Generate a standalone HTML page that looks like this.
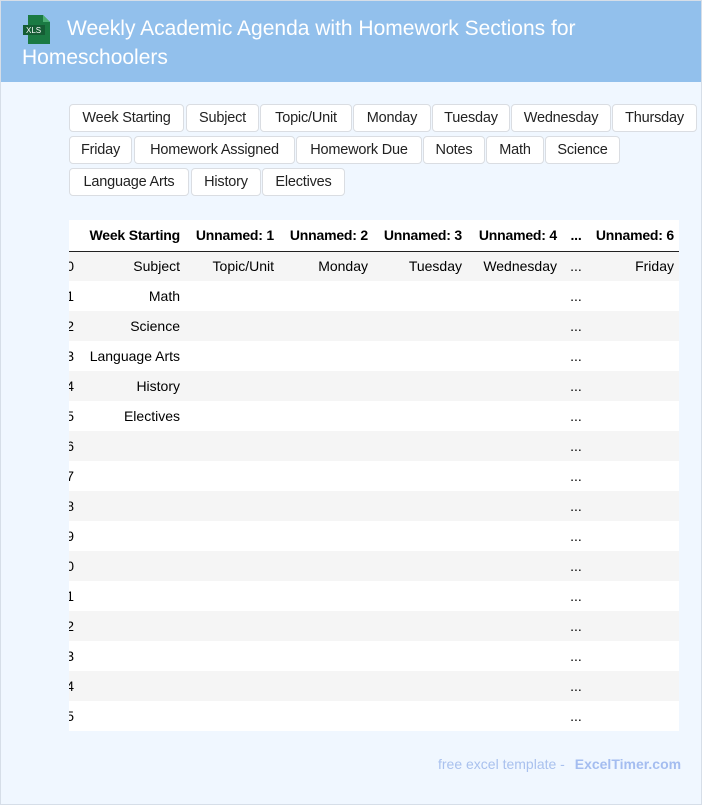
<!DOCTYPE html>
<html><head><meta charset="utf-8"><style>
body{margin:0;width:702px;height:805px;font-family:"Liberation Sans",Arial,sans-serif;background:#fff;}
.page{position:absolute;left:0;top:0;width:700px;height:803px;border:1px solid #d6dee8;background:#f0f7ff;overflow:hidden;}
.hdr{background:#92c0ec;height:81px;position:relative;}
.hdr h1{margin:0;position:absolute;left:21px;top:13px;width:670px;font-weight:normal;font-size:21px;line-height:29px;color:#fff;text-indent:45px;}
.icon{position:absolute;left:22px;top:14px;}
.tag{position:absolute;box-sizing:border-box;height:28px;line-height:26px;text-align:center;background:#fff;border:1px solid #dadde2;border-radius:4px;font-size:14.5px;color:#222;white-space:nowrap;letter-spacing:-0.2px;}
.tw{position:absolute;left:68px;top:219px;width:610px;height:511px;overflow:hidden;background:#fff;}
table{position:absolute;left:-18px;top:0;border-collapse:collapse;font-size:14px;table-layout:fixed;width:629px;}
td,th{height:30px;padding:0 6px 0 0;text-align:right;white-space:nowrap;box-sizing:border-box;overflow:hidden;}
td:first-child{padding-right:1px;overflow:visible;}
th{font-weight:bold;border-bottom:1.5px solid #222;height:31px;letter-spacing:-0.2px;}
tr:nth-child(even) td{background:#f5f5f5;}
.d{text-align:center;padding:0;}
.foot{position:absolute;left:437px;top:755px;font-size:14px;color:#a9c1ee;}
.foot b{color:#a4bdf0;margin-left:6px;}
</style></head><body><div class="page">
<div class="hdr">
<svg class="icon" width="28" height="30" viewBox="0 0 28 30"><path d="M5 0h15l7 7v22H5z" fill="#1b7a43"/><path d="M20 0v7h7z" fill="#4caf74"/><rect x="0" y="10" width="22" height="10" fill="#155d34"/><text x="3" y="18" font-size="8" fill="#fff" font-family="Liberation Sans">XLS</text></svg>
<h1>Weekly Academic Agenda with Homework Sections for Homeschoolers</h1>
</div>
<span class="tag" style="left:68px;top:103px;width:115px">Week Starting</span>
<span class="tag" style="left:185px;top:103px;width:73px">Subject</span>
<span class="tag" style="left:259px;top:103px;width:92px">Topic/Unit</span>
<span class="tag" style="left:352px;top:103px;width:78px">Monday</span>
<span class="tag" style="left:431px;top:103px;width:78px">Tuesday</span>
<span class="tag" style="left:510px;top:103px;width:100px">Wednesday</span>
<span class="tag" style="left:611px;top:103px;width:85px">Thursday</span>
<span class="tag" style="left:68px;top:135px;width:63px">Friday</span>
<span class="tag" style="left:133px;top:135px;width:161px">Homework Assigned</span>
<span class="tag" style="left:295px;top:135px;width:126px">Homework Due</span>
<span class="tag" style="left:422px;top:135px;width:62px">Notes</span>
<span class="tag" style="left:485px;top:135px;width:58px">Math</span>
<span class="tag" style="left:544px;top:135px;width:75px">Science</span>
<span class="tag" style="left:68px;top:167px;width:120px">Language Arts</span>
<span class="tag" style="left:190px;top:167px;width:70px">History</span>
<span class="tag" style="left:261px;top:167px;width:83px">Electives</span>
<div class="tw"><table>
<colgroup><col style="width:24px"><col style="width:111px"><col style="width:94px"><col style="width:94px"><col style="width:94px"><col style="width:95px"><col style="width:26px"><col style="width:91px"></colgroup>
<tr><th></th><th>Week Starting</th><th>Unnamed: 1</th><th>Unnamed: 2</th><th>Unnamed: 3</th><th>Unnamed: 4</th><th class="d">...</th><th>Unnamed: 6</th></tr>
<tr><td>0</td><td>Subject</td><td>Topic/Unit</td><td>Monday</td><td>Tuesday</td><td>Wednesday</td><td class="d">...</td><td>Friday</td></tr>
<tr><td>1</td><td>Math</td><td></td><td></td><td></td><td></td><td class="d">...</td><td></td></tr>
<tr><td>2</td><td>Science</td><td></td><td></td><td></td><td></td><td class="d">...</td><td></td></tr>
<tr><td>3</td><td>Language Arts</td><td></td><td></td><td></td><td></td><td class="d">...</td><td></td></tr>
<tr><td>4</td><td>History</td><td></td><td></td><td></td><td></td><td class="d">...</td><td></td></tr>
<tr><td>5</td><td>Electives</td><td></td><td></td><td></td><td></td><td class="d">...</td><td></td></tr>
<tr><td>6</td><td></td><td></td><td></td><td></td><td></td><td class="d">...</td><td></td></tr>
<tr><td>7</td><td></td><td></td><td></td><td></td><td></td><td class="d">...</td><td></td></tr>
<tr><td>8</td><td></td><td></td><td></td><td></td><td></td><td class="d">...</td><td></td></tr>
<tr><td>9</td><td></td><td></td><td></td><td></td><td></td><td class="d">...</td><td></td></tr>
<tr><td>10</td><td></td><td></td><td></td><td></td><td></td><td class="d">...</td><td></td></tr>
<tr><td>11</td><td></td><td></td><td></td><td></td><td></td><td class="d">...</td><td></td></tr>
<tr><td>12</td><td></td><td></td><td></td><td></td><td></td><td class="d">...</td><td></td></tr>
<tr><td>13</td><td></td><td></td><td></td><td></td><td></td><td class="d">...</td><td></td></tr>
<tr><td>14</td><td></td><td></td><td></td><td></td><td></td><td class="d">...</td><td></td></tr>
<tr><td>15</td><td></td><td></td><td></td><td></td><td></td><td class="d">...</td><td></td></tr>
</table></div>
<div class="foot">free excel template - <b>ExcelTimer.com</b></div>
</div></body></html>
